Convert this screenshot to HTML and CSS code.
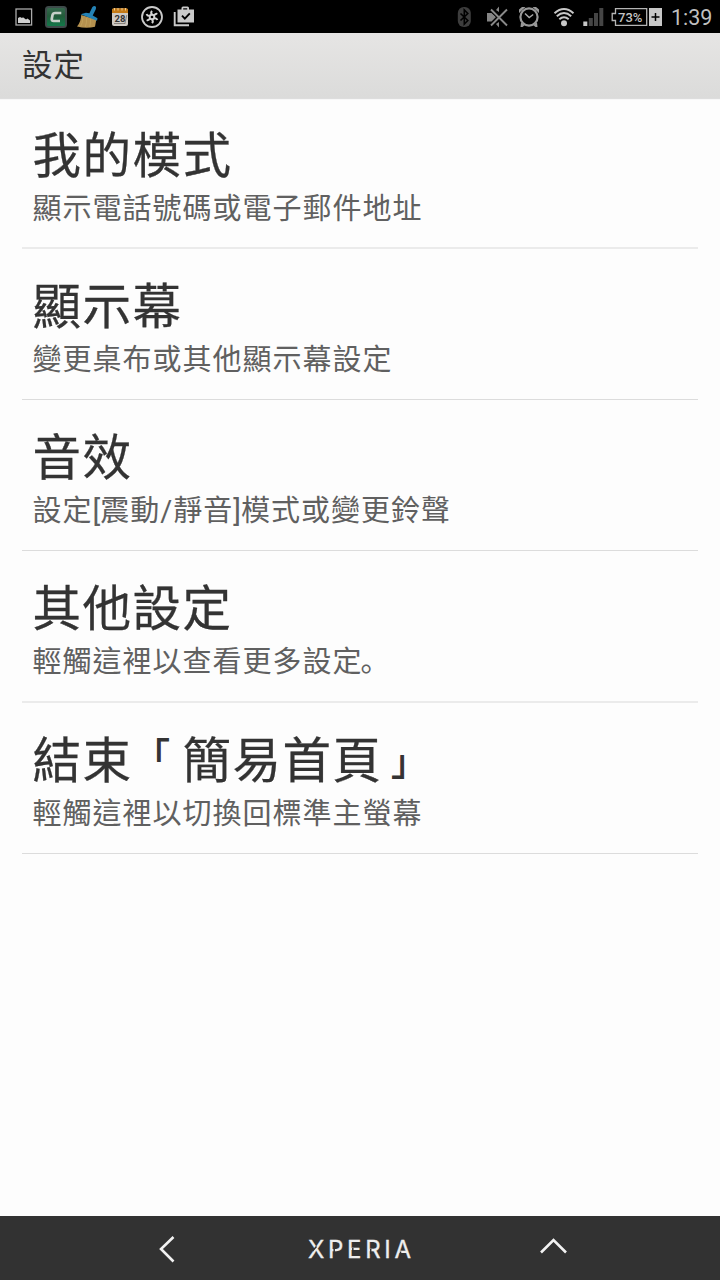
FILE: index.html
```html
<!DOCTYPE html>
<html lang="zh-Hant">

<head>
    <meta charset="utf-8">
    <title>設定</title>
    <link rel="stylesheet" href="styles.css">
</head>

<body>
    <div class="status_bar">
        <div class="notifications">
            <!-- picture -->
            <svg class="icon" viewBox="0 0 24 24">
                <rect x="4" y="4" width="15.6" height="16" fill="none" stroke="#aaa" stroke-width="1.3" />
                <path d="M6 18v-5l2-1 2 1 1-.8 3 2.3 1.5-1 2.5 2V18z" fill="#d0d0d0" />
            </svg>
            <!-- green app -->
            <svg class="icon" viewBox="0 0 24 24">
                <defs>
                    <linearGradient id="green" x1="0" y1="0" x2="0" y2="1">
                        <stop offset="0" stop-color="#35684d" />
                        <stop offset=".45" stop-color="#225b3a" />
                        <stop offset="1" stop-color="#12794a" />
                    </linearGradient>
                </defs>
                <rect x="1" y="1" width="22" height="22" rx="3.5" fill="#3e4a4a" />
                <rect x="3" y="3" width="18" height="18" rx="1.5" fill="url(#green)" />
                <path d="M17.3 8h-6.2Q9 8 8.5 10l-.7 3.7Q7.4 16 9.6 16H16" fill="none" stroke="#c6d0c9" stroke-width="2.7" />
            </svg>
            <!-- broom -->
            <svg class="icon" viewBox="0 0 24 24">
                <path d="M5.2 10Q5 17 1 21.5q9 2.2 18 .3l1.3-7.3z" fill="#b5914f" />
                <path d="M6.8 12.5Q7 18 4.5 21.5M10.5 13Q11 18 9.2 22M14.5 14q.3 4-.8 8" fill="none" stroke="#c4a660" stroke-width=".7" />
                <path d="M4.7 9.2l5.2-1.5 3.5.6 3-6.2q1.8-2 3.3-.5.8 1.2 0 2.8l-3 6 4.8 2.8-.5 2.5z" fill="#2482b5" />
            </svg>
            <!-- calendar -->
            <svg class="icon" viewBox="0 0 24 24">
                <rect x="4" y="3.5" width="16" height="17.5" rx="2" fill="#cfcac4" />
                <path d="M4 8V5q0-1.7 1.7-1.7h12.6Q20 3.3 20 5v3z" fill="#c47a16" />
                <path d="M6.5 3v2.5M10 3v2.5M14 3v2.5M17.5 3v2.5" stroke="#f0cb91" />
                <path d="M6 18.5h11M18.8 10l-2 9" stroke="#77716b" stroke-width=".8" />
                <text class="cal_day" x="6.5" y="16.5">28</text>
            </svg>
            <!-- shutter -->
            <svg class="icon" viewBox="0 0 24 24">
                <circle cx="12" cy="12" r="10" fill="none" stroke="#cacaca" stroke-width="1.8" />
                <g fill="none" stroke="#d4d4d4" stroke-width="1.9">
                    <path id="blade" d="M12 9.5Q10.3 7.5 12 5.8" />
                    <use href="#blade" transform="rotate(60 12 12)" />
                    <use href="#blade" transform="rotate(120 12 12)" />
                    <use href="#blade" transform="rotate(180 12 12)" />
                    <use href="#blade" transform="rotate(240 12 12)" />
                    <use href="#blade" transform="rotate(300 12 12)" />
                    <circle cx="12" cy="12" r="2.3" />
                </g>
            </svg>
            <!-- store bag with a tick -->
            <svg class="icon" viewBox="0 0 24 24">
                <path d="M2.7 7v13.2H17" fill="none" stroke="#cacaca" stroke-width="1.9" />
                <path d="M5.5 4.5h4V3q0-1.5 1.5-1.5h4.5Q17 1.5 17 3v1.5h5v13H5.5zm5.7 0h4V3.2h-4z" fill="#cacaca" fill-rule="evenodd" />
                <path d="M10 10.7l2.8 2.9 5-5.2" fill="none" stroke="#000" stroke-width="1.9" />
            </svg>
        </div>
        <div class="system">
            <!-- bluetooth -->
            <svg class="icon" viewBox="0 0 24 24">
                <rect x="5.8" y="2" width="13" height="20" rx="6" fill="#3d3d3d" />
                <path d="M8.5 8.5l7.3 7-3.5 3.5V5l3.5 3.5-7.3 7" fill="none" stroke="#000" stroke-width="1.6" />
            </svg>
            <!-- vibrate off -->
            <svg class="icon icon_mute" viewBox="0 0 24 24">
                <path d="M2 8h4.5l4.5 4-4.5 4.5H2zM11 5l3-3.5V7zM11 19l3 3.5V17z" fill="#858585" />
                <path d="M6 4.500l16 16M22 4.500l-16 16" stroke="#000" stroke-width="3.8" />
                <path d="M6 4.500l16 16M22 4.500l-16 16" stroke="#898989" stroke-width="1.9" />
            </svg>
            <!-- alarm -->
            <svg class="icon icon_alarm" viewBox="0 0 24 24">
                <circle cx="12" cy="12" r="8.6" fill="none" stroke="#999" stroke-width="2.2" />
                <path d="M2 8V4.500L5 2h3.500zM22 8V4.500L19 2h-3.500zM4 17.500L3.500 22h2L8 20zM20 17.500l.5 4.500h-2L16 20z" fill="#999" />
                <path d="M8 8.500l4.200 4 4-3" fill="none" stroke="#a8a8a8" stroke-width="1.5" />
            </svg>
            <!-- wifi -->
            <svg class="icon icon_wifi" viewBox="0 0 24 24">
                <circle cx="12" cy="18.2" r="3" fill="#c8c8c8" />
                <path d="M2.5 8.2Q12-.2 21.5 8.2M4.8 11.2q7.2-6.300 14.400 0M7.300 14.300q4.700-4 9.400 0" fill="none" stroke="#c8c8c8" stroke-width="2" />
            </svg>
            <!-- signal -->
            <svg class="icon icon_signal" viewBox="0 0 24 24">
                <rect x="2.3" y="16.5" width="4" height="4.5" fill="#c8c8c8" />
                <path d="M7.8 13h4v8h-4zM13 8h4v13h-4zM18.3 3h4v18h-4z" fill="#454545" />
            </svg>
            <!-- battery -->
            <svg class="battery" viewBox="0 0 54 24">
                <path d="M5.5 3.7h31.2v16.6H5.5v-4.8H2.2v-7h3.3z" fill="none" stroke="#b5b5b5" stroke-width="1.3" />
                <text class="battery_text" x="8" y="16.7">73%</text>
                <rect x="39" y="3" width="13" height="18" fill="#c8c8c8" />
                <path d="M45.5 8v8M41.5 12h8" stroke="#000" stroke-width="1.5" />
            </svg>
            <div class="clock">1:39</div>
        </div>
    </div>

    <div class="header">設定</div>

    <div class="settings">
        <div class="row soft_line">
            <div class="row_title">我的模式</div>
            <div class="row_text">顯示電話號碼或電子郵件地址</div>
        </div>
        <div class="row">
            <div class="row_title">顯示幕</div>
            <div class="row_text">變更桌布或其他顯示幕設定</div>
        </div>
        <div class="row">
            <div class="row_title">音效</div>
            <div class="row_text">設定<span class="mark">[</span>震動/靜音<span class="mark">]</span>模式或變更鈴聲</div>
        </div>
        <div class="row row_tall soft_line">
            <div class="row_title">其他設定</div>
            <div class="row_text">輕觸這裡以查看更多設定<span class="full_stop" lang="zh-Hans">。</span></div>
        </div>
        <div class="row">
            <div class="row_title">結束<span class="corner corner_open">「</span>簡易首頁<span class="corner corner_close">」</span></div>
            <div class="row_text">輕觸這裡以切換回標準主螢幕</div>
        </div>
    </div>

    <div class="nav_bar">
        <svg class="nav_icon" viewBox="0 0 30 30">
            <path d="M21.5 4L9 16l12.5 12.5" />
        </svg>
        <div class="brand">XPERIA
            <!-- gaps in the letters of the logo -->
            <svg class="brand_cuts" viewBox="0 0 104 20">
                <path d="M4.500 11l4-4.500M26.200 9v5M44.800 8v6M62.700 9v5M92.500 15.500v-4" />
            </svg>
        </div>
        <svg class="nav_icon" viewBox="0 0 30 30">
            <path d="M3 19.500L15.500 7 28 19.500" />
        </svg>
    </div>
</body>

</html>
```

FILE: styles.css
```css
body {
    margin: 0;
    height: 1280px;
    display: flex;
    flex-direction: column;
    background-color: #fdfdfd;
    color: #333;
    font-family: Roboto, "Noto Sans CJK TC", sans-serif;
}

.status_bar {
    height: 33px;
    display: flex;
    justify-content: space-between;
    background-color: #000;
    overflow: hidden;
}

.notifications,
.system {
    display: flex;
    align-items: center;
    padding-top: 1px;
}

.notifications {
    gap: 8px;
    padding-left: 12px;
}

.system {
    padding-right: 7px;
}

.icon {
    width: 24px;
    height: 24px;
    flex: none;
}

.icon_mute {
    margin-left: 9px;
}

.icon_alarm {
    margin-left: 8px;
}

.icon_wifi {
    margin-left: 11px;
}

.icon_signal {
    margin-left: 5px;
}

.battery {
    width: 54px;
    height: 24px;
    margin-left: 5px;
}

.cal_day {
    font-size: 9.5px;
    font-weight: 700;
    fill: #333;
}

.battery_text {
    font-size: 13px;
    font-weight: 500;
    fill: #c4c4c4;
}

.clock {
    width: 42px;
    margin-left: 7px;
    padding-top: 1px;
    color: #bfbfbf;
    font-size: 21.5px;
    line-height: 32px;
}

.header {
    height: 65px;
    box-sizing: border-box;
    padding-left: 22px;
    background: linear-gradient(#e6e5e4, #dbdbda);
    box-shadow: 0 1px 1px #ddd;
    font-size: 30.5px;
    letter-spacing: 1px;
    line-height: 66px;
}

.settings {
    flex: 1;
    padding: 0 22px;
}

.row {
    height: 151px;
    box-sizing: border-box;
    padding: 30px 10px 0 10.5px;
    border-bottom: 1px solid #dcdcdc;
}

.row_tall {
    height: 152px;
}

.soft_line {
    border-bottom: 2px solid #ebebeb;
}

.row_title {
    height: 58px;
    font-size: 48.5px;
    letter-spacing: 1.5px;
    line-height: 58px;
    -webkit-text-stroke: 0.3px;
}

.row_text {
    height: 48px;
    color: #606060;
    font-size: 29px;
    letter-spacing: 1px;
    line-height: 47px;
}

.mark {
    letter-spacing: 0;
}

.full_stop {
    margin-left: -2px;
    font-family: "Noto Sans CJK SC", sans-serif;
    line-height: 1;
}

/* the brackets are smaller than the other characters but keep their cell */
.corner {
    display: inline-block;
    width: 50px;
    font-size: 34px;
    line-height: 1;
    letter-spacing: 0;
    -webkit-text-stroke: 1.2px;
}

.corner_open {
    text-indent: 3px;
    vertical-align: 10px;
}

.corner_close {
    text-indent: 9px;
    vertical-align: 3px;
}

.nav_bar {
    height: 64px;
    display: flex;
    align-items: center;
    justify-content: center;
    gap: 126px;
    background-color: #323232;
}

.nav_icon {
    width: 30px;
    height: 30px;
    fill: none;
    stroke: #f2f2f2;
    stroke-width: 2.6;
}

.brand {
    position: relative;
    width: 104px;
    padding-top: 4px;
    color: #eee;
    font-family: Inter, sans-serif;
    font-size: 24px;
    letter-spacing: 3.7px;
    line-height: 60px;
    white-space: nowrap;
    -webkit-text-stroke: 0.3px;
}

/* lies over the letters */
.brand_cuts {
    position: absolute;
    left: 0;
    top: 24px;
    width: 104px;
    height: 20px;
    fill: none;
    stroke: #323232;
    stroke-width: 1.5;
}
```
